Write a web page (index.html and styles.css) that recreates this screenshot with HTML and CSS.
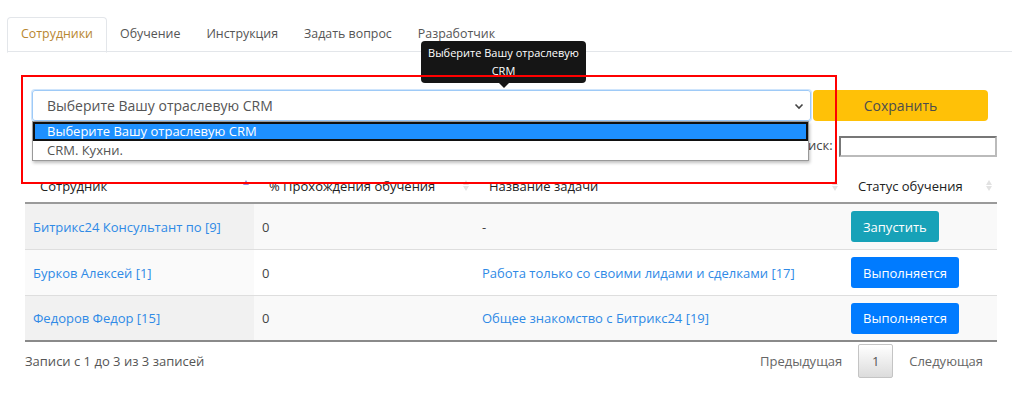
FILE: index.html
```html
<!DOCTYPE html>
<html lang="ru">
<head>
  <meta charset="UTF-8">
  <title>Обучение сотрудников</title>
  <link rel="stylesheet" href="styles.css">
</head>
<body>
<div class="page">

<ul class="tabs">
  <li class="tab active">Сотрудники</li>
  <li class="tab">Обучение</li>
  <li class="tab">Инструкция</li>
  <li class="tab">Задать вопрос</li>
  <li class="tab">Разработчик</li>
</ul>

<div class="panel">
  <div class="crm-row">
    <div class="crm-select">
      <span>Выберите Вашу отраслевую CRM</span>
      <svg class="chev" width="10" height="7" viewBox="0 0 10 7"><path d="M1.5 1.5 L5 5 L8.5 1.5" fill="none" stroke="#444" stroke-width="1.6"/></svg>
    </div>
    <button class="save">Сохранить</button>
  </div>

  <div class="search-row">
    <label>Поиск: <input type="text"></label>
  </div>

  <table class="grid">
    <colgroup>
      <col style="width:229px"><col style="width:220px"><col style="width:369px"><col style="width:154px">
    </colgroup>
    <thead>
      <tr>
        <th><div class="th-in">Сотрудник <span class="sort asc"></span></div></th>
        <th><div class="th-in">% Прохождения обучения <span class="sort"></span></div></th>
        <th><div class="th-in">Название задачи <span class="sort"></span></div></th>
        <th><div class="th-in">Статус обучения <span class="sort"></span></div></th>
      </tr>
    </thead>
    <tbody>
      <tr class="odd">
        <td class="sorted"><a href="#">Битрикс24 Консультант по [9]</a></td>
        <td>0</td>
        <td>-</td>
        <td><button class="btn start">Запустить</button></td>
      </tr>
      <tr class="even">
        <td class="sorted"><a href="#">Бурков Алексей [1]</a></td>
        <td>0</td>
        <td><a href="#">Работа только со своими лидами и сделками [17]</a></td>
        <td><button class="btn running">Выполняется</button></td>
      </tr>
      <tr class="odd">
        <td class="sorted"><a href="#">Федоров Федор [15]</a></td>
        <td>0</td>
        <td><a href="#">Общее знакомство с Битрикс24 [19]</a></td>
        <td><button class="btn running">Выполняется</button></td>
      </tr>
    </tbody>
  </table>

  <div class="table-foot">
    <div class="info">Записи с 1 до 3 из 3 записей</div>
    <div class="pager">
      <span class="pg">Предыдущая</span>
      <span class="pg current">1</span>
      <span class="pg">Следующая</span>
    </div>
  </div>
</div>

<ul class="dropdown">
  <li class="opt selected">Выберите Вашу отраслевую CRM</li>
  <li class="opt">CRM. Кухни.</li>
</ul>

<div class="tip">Выберите Вашу отраслевую<br>CRM</div>

<div class="mark"></div>

</div>
</body>
</html>
```

FILE: styles.css
```css
body { margin: 0; background: #fff; font-family: "Open Sans", "Noto Sans", sans-serif; color: #333; font-size: 13px; }
.page { position: relative; padding: 17px 12px 0 7px; }

.tabs { display: flex; list-style: none; margin: 0; padding: 0; border-bottom: 1px solid #e3e6ea; height: 34px; }
.tab { padding: 0 13px; line-height: 34px; color: #555; font-size: 12.4px; }
.tab.active { color: #b8862f; border: 1px solid #e3e6ea; border-bottom-color: #fff; border-radius: 4px 4px 0 0; height: 34px; line-height: 32px; }

.panel { padding: 0 15px 0 18px; }

.crm-row { display: flex; gap: 2px; margin: 38px 9px 0 7px; height: 31px; }
.crm-select { flex: 1; display: flex; align-items: center; justify-content: space-between; border: 1px solid #9ecaf7; border-radius: 3px; padding: 0 6px 0 14px; color: #555; font-size: 14px; box-shadow: 0 0 0 1px #cfe5fc; }
.chev { margin-top: 2px; }
.save { width: 175px; border: none; border-radius: 4px; background: #ffc107; color: #4d4d4d; font-family: inherit; font-size: 14px; }

.search-row { margin-top: 15px; text-align: right; color: #444; font-size: 13px; height: 23px; }
.search-row input { width: 150px; height: 17px; margin-left: 3px; border: 2px solid #777; border-right-color: #bbb; border-bottom-color: #bbb; padding: 0 2px; vertical-align: middle; }

.grid { width: 972px; border-collapse: collapse; table-layout: fixed; margin-top: 10px; }
.grid th { height: 33px; padding: 0 4px 0 15px; text-align: left; font-weight: normal; color: #222; font-size: 13px; border-bottom: 2px solid #9a9a9a; }
.th-in { display: flex; justify-content: space-between; align-items: center; }
.sort { width: 7px; height: 11px; position: relative; }
.sort::before, .sort::after { content: ""; position: absolute; left: 0; border-left: 3.5px solid transparent; border-right: 3.5px solid transparent; }
.sort::before { top: 0; border-bottom: 5px solid #e2e2e2; }
.sort::after { bottom: 0; border-top: 5px solid #e2e2e2; }
.sort.asc::before { border-bottom-color: #8f8fe8; }
.sort.asc::after { border-top-color: transparent; }

.grid td { height: 45px; padding: 0 8px; color: #444; border-top: 1px solid #dedede; }
.grid tbody tr:first-child td { border-top: none; }
.grid tbody tr:last-child td { height: 44px; border-bottom: 2px solid #8a8a8a; }
.odd td { background: #f9f9f9; }
.odd td.sorted { background: #f1f1f1; }
.even td.sorted { background: #fafafa; }
.grid a { color: #2f8ae6; text-decoration: none; }

.btn { height: 31px; border: none; border-radius: 3px; color: #fff; font-family: inherit; font-size: 13px; padding: 0 12px; }
.btn.start { background: #17a2b8; }
.btn.running { background: #007bff; }

.table-foot { display: flex; justify-content: space-between; align-items: center; width: 972px; padding-top: 2px; }
.info { color: #555; }
.pager { display: flex; align-items: center; }
.pg { padding: 0 14px; color: #666; line-height: 32px; margin-left: 2px; }
.pg.current { width: 33px; padding: 0; text-align: center; border: 1px solid #c4c4c4; border-radius: 2px; background: linear-gradient(#fff, #dcdcdc); color: #555; }

.dropdown { position: absolute; left: 32px; top: 121px; width: 775px; margin: 0; padding: 0; list-style: none; background: #fff; border: 1px solid #999; box-shadow: 1px 2px 3px rgba(0,0,0,0.25); font-size: 13px; }
.opt { height: 19px; line-height: 19px; padding-left: 14px; color: #555; }
.opt.selected { background: #1e90ff; color: #fff; border: 2px solid #111; height: 15px; line-height: 15px; padding-left: 12px; }

.tip { position: absolute; left: 421px; top: 41px; width: 165px; padding: 3px 0; border-radius: 4px; background: #151515; color: #fff; font-size: 11px; line-height: 18px; text-align: center; }
.tip::after { content: ""; position: absolute; left: 78px; bottom: -5px; border-left: 5px solid transparent; border-right: 5px solid transparent; border-top: 5px solid #151515; }

.mark { position: absolute; left: 21px; top: 75px; width: 812px; height: 105px; border: 2px solid #f00; }
```
